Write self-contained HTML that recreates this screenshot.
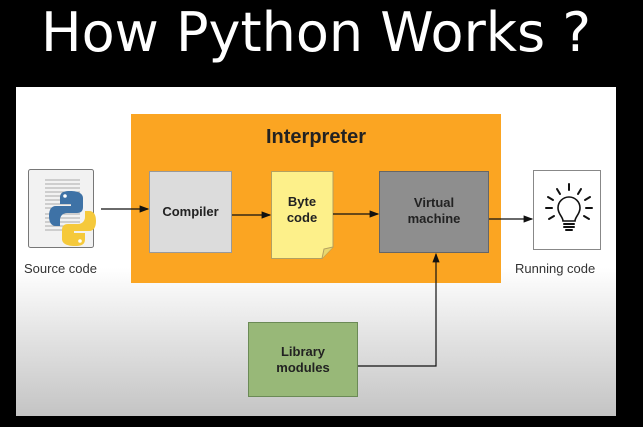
<!DOCTYPE html>
<html><head><style>
body{margin:0;width:643px;height:427px;background:#000;position:relative;overflow:hidden;font-family:"Liberation Sans",sans-serif}
.a{position:absolute}
.t{position:absolute;left:0;width:632px;top:0px;text-align:center;color:#fff;font-family:"DejaVu Sans",sans-serif;font-size:54px;line-height:66px;white-space:nowrap}
.panel{left:16px;top:87px;width:600px;height:329px;background:linear-gradient(#fff 0,#fff 55%,#e4e4e4 75%,#c4c4c4 100%)}
.box{position:absolute;display:flex;align-items:center;justify-content:center;text-align:center;font-weight:bold;font-size:13px;color:#222;line-height:16px;box-sizing:border-box}
.lbl{position:absolute;font-size:13px;color:#333}
</style></head><body>
<div class="t">How Python Works ?</div>
<div class="a panel"></div>
<div class="a" style="left:131px;top:114px;width:370px;height:169px;background:#fba522"></div>
<div class="a" style="left:131px;top:126px;width:370px;text-align:center;font-weight:bold;font-size:20px;color:#222">Interpreter</div>
<div class="box" style="left:149px;top:171px;width:83px;height:82px;background:#dcdcdc;border:1px solid #999">Compiler</div>
<svg class="a" style="left:271px;top:171px" width="63" height="88"><path d="M0.5 0.5H62V76L51 87.5H0.5Z" fill="#fdf08a" stroke="#b3a060"/><path d="M51 87.5L53 78L62 76" fill="#e8d870" stroke="#b3a060"/></svg>
<div class="box" style="left:271px;top:171px;width:62px;height:78px">Byte<br>code</div>
<div class="box" style="left:379px;top:171px;width:110px;height:82px;background:#8e8e8e;border:1px solid #666;padding-bottom:2px">Virtual<br>machine</div>
<div class="box" style="left:248px;top:322px;width:110px;height:75px;background:#98b878;border:1px solid #6b8a56">Library<br>modules</div>
<div class="a" style="left:533px;top:170px;width:68px;height:80px;background:#fff;border:1px solid #888;box-sizing:border-box"></div>
<svg class="a" style="left:0;top:0" width="643" height="427">
<defs><marker id="m" markerWidth="8" markerHeight="8" refX="7" refY="4" orient="auto"><path d="M0 1L8 4L0 7Z" fill="#111"/></marker></defs>
<g stroke="#111" stroke-width="1.2" fill="none">
<line x1="101" y1="209" x2="148" y2="209" marker-end="url(#m)"/>
<line x1="232" y1="215" x2="270" y2="215" marker-end="url(#m)"/>
<line x1="333" y1="214" x2="378" y2="214" marker-end="url(#m)"/>
<line x1="489" y1="219" x2="532" y2="219" marker-end="url(#m)"/>
<polyline points="358,366 436,366 436,254" marker-end="url(#m)"/>
</g>
<g stroke="#111" stroke-width="2" fill="none" stroke-linecap="round">
<path d="M563 221c0-4-5-7-5-13a11 11 0 0 1 22 0c0 6-5 9-5 13z" stroke-width="1.6"/>
<path d="M564 224h10M564 227h10M566 230h6" stroke-width="2"/>
<path d="M569 184v6M557 189l3 5M581 189l-3 5M548 197l5 3M590 197l-5 3M546 208h6M586 208h6M549 219l5-3M589 219l-5-3"/>
</g>
<rect x="28.5" y="169.5" width="65" height="78" fill="#f2f2f2" stroke="#777" rx="2"/>
<g stroke="#aaa"><path d="M45 180h35M45 184h35M45 188h35M45 192h35M45 196h35M45 200h35M45 204h35M45 208h20M45 214h35M45 218h35M45 222h35M45 226h35M45 230h35"/></g>
<path d="M70 191c-10 0-10 4-10 8v5h11v2h-15c-5 0-7 4-7 10s2 10 7 10h4v-6c0-4 3-7 7-7h10c4 0 6-2 6-6v-9c0-4-4-7-13-7z" fill="#3e72a6"/>
<path d="M75 246c10 0 10-4 10-8v-5h-11v-2h15c5 0 7-4 7-10s-2-10-7-10h-4v6c0 4-3 7-7 7h-10c-4 0-6 2-6 6v9c0 4 4 7 13 7z" fill="#f5c93b"/>
<circle cx="65" cy="196" r="1.8" fill="#fff"/><circle cx="80" cy="241" r="1.8" fill="#fff"/>
</svg>
<div class="lbl" style="left:24px;top:261px">Source code</div>
<div class="lbl" style="left:515px;top:261px">Running code</div>
</body></html>
